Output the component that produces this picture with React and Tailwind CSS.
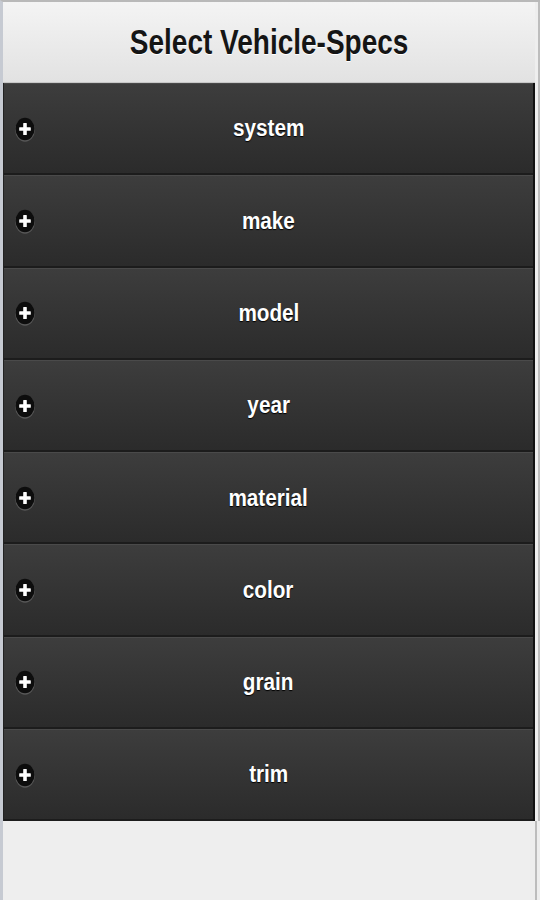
import React from "react";

const items = ["system", "make", "model", "year", "material", "color", "grain", "trim"];

function PlusIcon() {
  return (
    <svg width="22" height="28" viewBox="0 0 22 28" className="shrink-0">
      <ellipse cx="11" cy="15" rx="9.8" ry="11.8" fill="#a0a0a0" opacity="0.35" />
      <ellipse cx="11" cy="14" rx="9.5" ry="11.2" fill="#0d0d0d" />
      <rect x="9.2" y="8" width="3.6" height="12" fill="#ffffff" rx="0.6" />
      <rect x="5.2" y="12.2" width="11.6" height="3.6" fill="#ffffff" rx="0.6" />
    </svg>
  );
}

export default function App() {
  return (
    <div
      className="w-[540px] h-[900px] bg-[#eeeeee] flex flex-col border-t-2 border-t-[#b9b9b9] border-l-[3px] border-l-[#c6cad2] overflow-hidden"
      style={{ fontFamily: "'Liberation Sans', Arial, sans-serif" }}
    >
      <div className="flex pr-[3px] border-r-2 border-r-[#bdbdbd]">
        <div className="flex-1 flex flex-col">
          <div className="h-[81px] bg-gradient-to-b from-[#f4f4f4] to-[#e2e2e2] flex items-center justify-center border-b border-b-[#c8c8c8]">
            <span className="text-[35px] font-bold text-[#151515] scale-x-[0.8] whitespace-nowrap [text-shadow:0_1px_0_#ffffff]">
              Select Vehicle-Specs
            </span>
          </div>
          <div className="flex flex-col border-r-2 border-r-[#111111] border-l border-l-[#222222]">
            {items.map((it) => (
              <div
                key={it}
                className="h-[92.3px] relative flex items-center justify-center bg-gradient-to-b from-[#3d3d3d] to-[#2b2b2b] border-t border-t-[#4a4a4a] border-b-2 border-b-[#1c1c1c]"
              >
                <div className="absolute left-[10px] top-1/2 -translate-y-1/2 flex">
                  <PlusIcon />
                </div>
                <span className="text-[23px] font-bold text-white scale-x-[0.9] [text-shadow:0_1px_1px_#000000] whitespace-nowrap">
                  {it}
                </span>
              </div>
            ))}
          </div>
        </div>
      </div>
      <div className="flex-1 border-r-2 border-r-[#bdbdbd] mr-[3px]"></div>
    </div>
  );
}
